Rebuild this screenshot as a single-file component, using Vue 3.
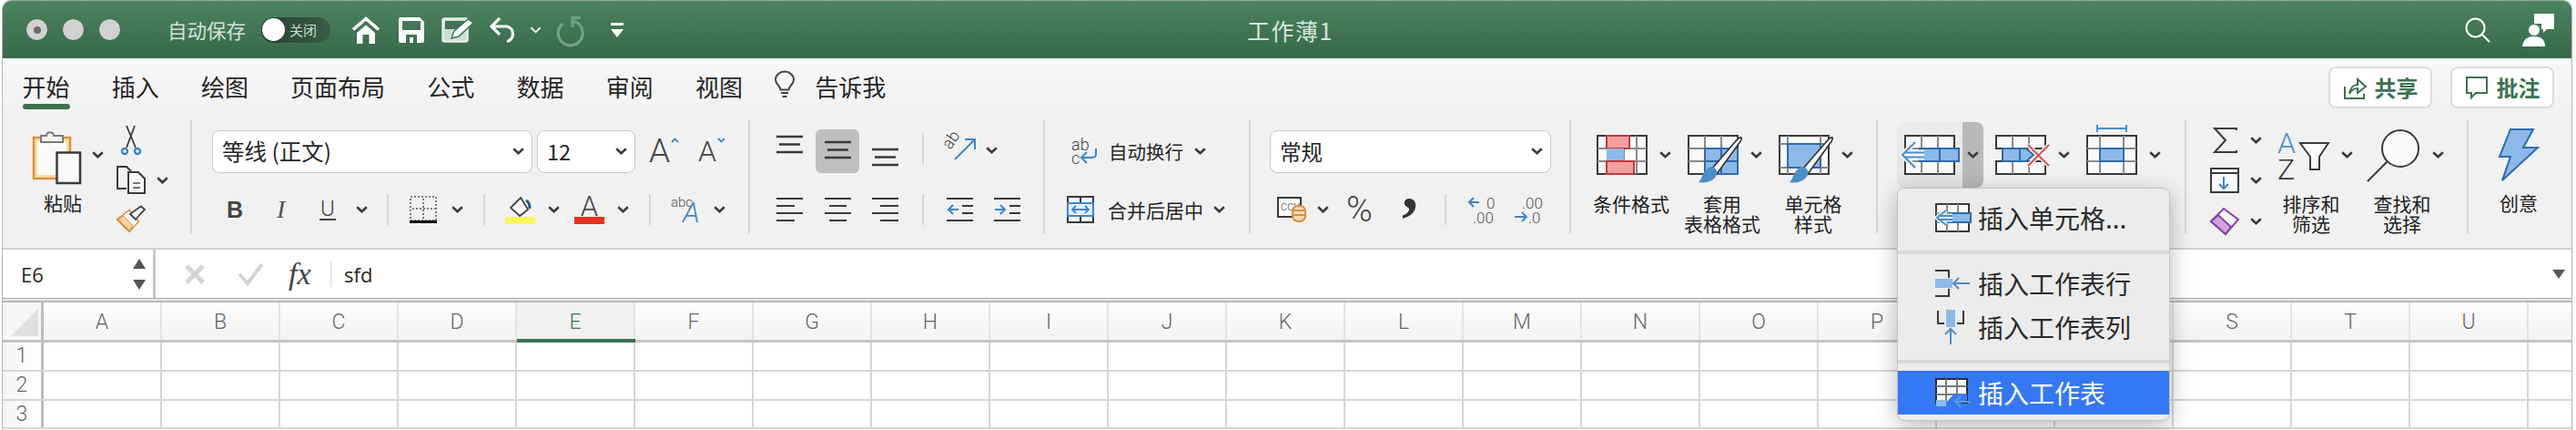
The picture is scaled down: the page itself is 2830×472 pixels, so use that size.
<template>
  <div class="window">
    <svg class="defs" width="0" height="0">
      <symbol id="chev" viewBox="0 0 13 8">
        <path d="M1.2 1.2L6.5 6.2L11.8 1.2" fill="none" stroke="#3a3a3a" stroke-width="2.6" />
      </symbol>
    </svg>

    <!-- title bar -->
    <header class="titlebar">
      <div class="tb-left">
        <span class="light"><i></i></span>
        <span class="light"></span>
        <span class="light"></span>
        <span class="autosave">自动保存</span>
        <span class="toggle"><b></b><em>关闭</em></span>
        <svg width="32" height="30" viewBox="0 0 32 30">
          <path d="M2 14.5L16 2.5L30 14.5" fill="none" stroke="#fff" stroke-width="3.6" />
          <path d="M6 18L16 9.5L26 18V30H19.5V20H12.5V30H6Z" fill="#fff" />
        </svg>
        <svg width="28" height="28" viewBox="0 0 28 28">
          <path fill-rule="evenodd" fill="#fff" d="M2 0H23L28 5V26a2 2 0 0 1-2 2H2a2 2 0 0 1-2-2V2a2 2 0 0 1 2-2ZM4 4V14H24V4ZM8 19V28H20V19ZM12 22H16V28H12Z" />
        </svg>
        <svg width="36" height="28" viewBox="0 0 36 28">
          <rect x="1.5" y="1.5" width="27" height="25" rx="2" fill="#cfded4" stroke="#e4ece7" stroke-width="2.5" />
          <rect x="4" y="4" width="22" height="9" fill="#3f7556" />
          <path d="M11 23L14 15L29 2L35 6L19 21Z" fill="#fff" stroke="#3f7556" stroke-width="1.5" />
        </svg>
        <svg width="31" height="29" viewBox="0 0 31 29">
          <path d="M11 2L2 11L11 20M2 11H19a8.5 8.5 0 0 1 0 16.5" fill="none" stroke="#fff" stroke-width="3.2" />
        </svg>
        <svg width="13" height="8" viewBox="0 0 13 8">
          <path d="M1.2 1.2L6.5 6.2L11.8 1.2" fill="none" stroke="#e8f0eb" stroke-width="2" />
        </svg>
        <svg width="30" height="30" viewBox="0 0 30 30">
          <path d="M6 8A13.5 13.5 0 1 0 17 5" fill="none" stroke="#74a086" stroke-width="3.2" />
          <path d="M26 1.5H17V12" fill="none" stroke="#74a086" stroke-width="3.2" />
        </svg>
        <svg width="14" height="16" viewBox="0 0 14 16">
          <rect width="14" height="3" fill="#fff" />
          <path d="M0 7H14L7 16Z" fill="#fff" />
        </svg>
      </div>
      <div class="tb-title">工作薄1</div>
      <div class="tb-right">
        <svg width="28" height="28" viewBox="0 0 28 28">
          <circle cx="11.5" cy="11.5" r="10" fill="none" stroke="#fff" stroke-width="2" />
          <path d="M18.5 18.5L27 27" stroke="#fff" stroke-width="2" />
        </svg>
        <svg width="36" height="36" viewBox="0 0 36 36">
          <path d="M13 0H35V17H27L23 21V17H21V11H13Z" fill="#fff" />
          <circle cx="13" cy="18" r="6.5" fill="#fff" stroke="#3c6f50" stroke-width="1" />
          <path d="M0 36C1 28 6 25 13 25S25 28 25 36Z" fill="#fff" />
        </svg>
      </div>
    </header>

    <!-- tabs -->
    <nav class="tabs">
      <span v-for="tab in tabs" :key="tab" class="tab" :class="{ active: tab === '开始' }">{{ tab }}</span>
      <span class="tell">
        <svg width="24" height="30" viewBox="0 0 24 30">
          <path d="M7.5 20.5C7 16 2 14.5 2 9.5a10 9 0 0 1 20 0C22 14.5 17 16 16.5 20.5Z" fill="none" stroke="#444" stroke-width="2" />
          <path d="M8 24H16M9.5 28H14.5" stroke="#444" stroke-width="2" />
        </svg>
        告诉我
      </span>
      <div class="tab-actions">
        <button class="pill">
          <svg width="26" height="26" viewBox="0 0 26 26">
            <path d="M2 12V25H23V20" fill="none" stroke="#3b7250" stroke-width="2" />
            <path d="M7 20C8 13 12 10 16 10V4L25 12L16 19V14C12 14 9 16 7 20Z" fill="none" stroke="#3b7250" stroke-width="2" />
          </svg>
          共享
        </button>
        <button class="pill">
          <svg width="26" height="26" viewBox="0 0 26 26">
            <path d="M2 2H24V19H12L7 24V19H2Z" fill="none" stroke="#3b7250" stroke-width="2" />
          </svg>
          批注
        </button>
      </div>
    </nav>

    <!-- ribbon -->
    <section class="ribbon">
      <!-- clipboard -->
      <div class="group g-clip">
        <div class="paste">
          <div class="paste-top">
            <svg width="53" height="59" viewBox="0 0 53 59">
              <rect x="1" y="8" width="40" height="45" fill="#fbdc9e" stroke="#df8c3e" stroke-width="2.4" />
              <rect x="5" y="12" width="32" height="37" fill="#fafafa" />
              <path d="M9 13V6H15C15.5 1 22.5 1 23 6H33V13Z" fill="#f4f4f4" stroke="#7a7a7a" stroke-width="2" />
              <rect x="26.5" y="24.5" width="25.5" height="33.5" fill="#fafafa" stroke="#3a3a3a" stroke-width="2.5" />
            </svg>
            <svg class="chev" width="13" height="8"><use href="#chev" /></svg>
          </div>
          <span class="lbl paste-lbl">粘贴</span>
        </div>
        <div class="clip-tools">
          <svg width="32" height="32" viewBox="0 0 32 32">
            <path d="M11 0L21 24M20 0L11 24" stroke="#3a3a3a" stroke-width="1.8" fill="none" />
            <circle cx="9" cy="28" r="3" fill="none" stroke="#3f85c8" stroke-width="2.4" />
            <circle cx="23" cy="28" r="3" fill="none" stroke="#3f85c8" stroke-width="2.4" />
          </svg>
          <div class="copy-row">
            <svg width="32" height="31" viewBox="0 0 32 31">
              <path d="M11 25H1V1H11L16 6" fill="none" stroke="#3a3a3a" stroke-width="2" />
              <path d="M13 7H24L31 14V30H13Z" fill="#fafafa" stroke="#3a3a3a" stroke-width="2" />
              <path d="M18 19H26M18 24H26" stroke="#777" stroke-width="2" />
            </svg>
            <svg width="13" height="8"><use href="#chev" /></svg>
          </div>
          <svg width="32" height="30" viewBox="0 0 32 30">
            <path d="M1 16L14 6L24 18L14 29Z" fill="#fad49c" stroke="#df8c3e" stroke-width="2.2" />
            <path d="M7 11.5L19 24L24 18L14 6Z" fill="#fafafa" stroke="#df8c3e" stroke-width="1" />
            <path d="M15 10L21 5.5L27 1.5L31 5L26 10L21 16Z" fill="#f4f4f4" stroke="#444" stroke-width="1.8" />
          </svg>
        </div>
      </div>

      <!-- font -->
      <div class="group g-font">
        <div class="row-top font-top">
          <div class="select font-name"><span>等线 (正文)</span><svg width="13" height="8"><use href="#chev" /></svg></div>
          <div class="select font-size"><span>12</span><svg width="13" height="8"><use href="#chev" /></svg></div>
          <span class="grow">
            <span class="big-a">A</span>
            <svg width="9" height="6" viewBox="0 0 9 6"><path d="M1 5L4.5 1.5L8 5" fill="none" stroke="#3f85c8" stroke-width="1.8" /></svg>
          </span>
          <span class="grow">
            <span class="big-a small-a">A</span>
            <svg width="9" height="6" viewBox="0 0 9 6"><path d="M1 1L4.5 4.5L8 1" fill="none" stroke="#3f85c8" stroke-width="1.8" /></svg>
          </span>
        </div>
        <div class="row-bot font-bot">
          <span class="fmt-b">B</span>
          <span class="fmt-i">I</span>
          <span class="fmt-u">U</span>
          <svg width="13" height="8"><use href="#chev" /></svg>
          <i class="sep"></i>
          <svg width="30" height="30" viewBox="0 0 30 30">
            <rect x="1" y="1" width="28" height="26" fill="none" stroke="#555" stroke-width="1.5" stroke-dasharray="2 2" />
            <path d="M15 3V26M3 14H28" stroke="#555" stroke-width="1.5" stroke-dasharray="2 2" />
            <rect y="27" width="30" height="3" fill="#111" />
          </svg>
          <svg width="13" height="8"><use href="#chev" /></svg>
          <i class="sep"></i>
          <svg width="33" height="31" viewBox="0 0 33 31">
            <path d="M6 13L17 2L25 15L16 22Z" fill="#fafafa" stroke="#444" stroke-width="1.8" />
            <path d="M23 5C27 7 27 11 27 14" fill="none" stroke="#26588f" stroke-width="3" />
            <rect y="23" width="33" height="8" fill="#fbf65c" />
          </svg>
          <svg width="13" height="8"><use href="#chev" /></svg>
          <span class="color-a"><span>A</span><i></i></span>
          <svg width="13" height="8"><use href="#chev" /></svg>
          <i class="sep"></i>
          <svg width="36" height="30" viewBox="0 0 36 30">
            <text x="0" y="12" class="svg-t" font-size="15" fill="#555">abc</text>
            <text x="13" y="29" class="svg-t" font-size="31" font-style="italic" fill="#3f85c8">A</text>
          </svg>
          <svg width="13" height="8"><use href="#chev" /></svg>
        </div>
      </div>

      <!-- alignment -->
      <div class="group g-align">
        <div class="row-top align-top">
          <svg width="29" height="48" viewBox="0 0 29 48">
            <path d="M0 8H29M3 16.5H26M0 25H29" stroke="#3a3a3a" stroke-width="2.4" />
          </svg>
          <span class="on-btn">
            <svg width="29" height="48" viewBox="0 0 29 48">
              <path d="M0 14H29M3 22.5H26M0 31H29" stroke="#3a3a3a" stroke-width="2.4" />
            </svg>
          </span>
          <svg width="29" height="48" viewBox="0 0 29 48">
            <path d="M0 22H29M3 30.5H26M0 39H29" stroke="#3a3a3a" stroke-width="2.4" />
          </svg>
          <i class="sep tall"></i>
          <svg class="orient" width="36" height="30" viewBox="0 0 36 30">
            <text class="svg-t" font-size="18" fill="#444" transform="translate(7 19) rotate(-55)">ab</text>
            <path d="M12 29L33 8M23 7H34V18" fill="none" stroke="#3f85c8" stroke-width="2" />
          </svg>
          <svg class="orient-chev" width="13" height="8"><use href="#chev" /></svg>
        </div>
        <div class="row-bot align-bot">
          <svg width="29" height="34" viewBox="0 0 29 34"><path d="M0 5H29M0 13H20M0 21H29M0 29H20" stroke="#3a3a3a" stroke-width="2.2" /></svg>
          <svg width="29" height="34" viewBox="0 0 29 34"><path d="M0 5H29M5 13H24M0 21H29M5 29H24" stroke="#3a3a3a" stroke-width="2.2" /></svg>
          <svg width="29" height="34" viewBox="0 0 29 34"><path d="M0 5H29M9 13H29M0 21H29M9 29H29" stroke="#3a3a3a" stroke-width="2.2" /></svg>
          <i class="sep"></i>
          <svg width="29" height="34" viewBox="0 0 29 34">
            <path d="M0 5H29M17 13H29M17 21H29M0 29H29" stroke="#3a3a3a" stroke-width="2.2" />
            <path d="M13 17H2M7 12L2 17L7 22" fill="none" stroke="#3f85c8" stroke-width="2" />
          </svg>
          <svg width="29" height="34" viewBox="0 0 29 34">
            <path d="M0 5H29M17 13H29M17 21H29M0 29H29" stroke="#3a3a3a" stroke-width="2.2" />
            <path d="M1 17H12M7 12L12 17L7 22" fill="none" stroke="#3f85c8" stroke-width="2" />
          </svg>
        </div>
      </div>

      <!-- wrap / merge -->
      <div class="group g-wrap">
        <div class="row-top wrap-top">
          <svg width="30" height="30" viewBox="0 0 30 30">
            <text x="0" y="14" class="svg-t" font-size="18" fill="#444">ab</text>
            <text x="0" y="29" class="svg-t" font-size="18" fill="#444">c</text>
            <path d="M27 12V18Q27 22 22 22H11M17 16L11 22L17 28" fill="none" stroke="#3f85c8" stroke-width="2" />
          </svg>
          <span class="cmd">自动换行</span>
          <svg width="13" height="8"><use href="#chev" /></svg>
        </div>
        <div class="row-bot wrap-bot">
          <svg width="30" height="30" viewBox="0 0 30 30">
            <rect x="1" y="1" width="28" height="28" fill="#fafafa" stroke="#3a3a3a" stroke-width="2" />
            <path d="M15 1V8M15 22V29" stroke="#3a3a3a" stroke-width="2" />
            <rect x="1" y="8" width="28" height="14" fill="#e8f1fa" stroke="#3f85c8" stroke-width="2" />
            <path d="M6 15H24M10 11L6 15L10 19M20 11L24 15L20 19" fill="none" stroke="#3f85c8" stroke-width="1.8" />
          </svg>
          <span class="cmd cmd-lg">合并后居中</span>
          <svg width="13" height="8"><use href="#chev" /></svg>
        </div>
      </div>

      <!-- number -->
      <div class="group g-num">
        <div class="row-top num-top">
          <div class="select wide"><span>常规</span><svg width="13" height="8"><use href="#chev" /></svg></div>
        </div>
        <div class="row-bot num-bot">
          <svg width="32" height="28" viewBox="0 0 32 28">
            <rect x="1" y="1" width="25" height="21" fill="#fafafa" stroke="#3a3a3a" stroke-width="2" />
            <text x="4" y="15" class="svg-t" font-size="11" fill="#444">CCY</text>
            <rect x="17" y="10" width="14" height="17" rx="6" fill="#f6dcb8" stroke="#df8c3e" stroke-width="2" />
            <path d="M17 15H31M17 20H31" stroke="#df8c3e" stroke-width="1.8" />
          </svg>
          <svg width="13" height="8"><use href="#chev" /></svg>
          <span class="pct">%</span>
          <svg width="20" height="30" viewBox="0 0 20 30">
            <text x="0" y="14" font-family="Liberation Serif" font-weight="700" font-size="72" fill="#333">,</text>
          </svg>
          <i class="sep"></i>
          <svg width="32" height="32" viewBox="0 0 32 32">
            <path d="M13 8H2M7 3L2 8L7 13" fill="none" stroke="#3f85c8" stroke-width="2" />
            <text x="21" y="15" class="svg-t" font-size="17" fill="#555">0</text>
            <text x="6" y="31" class="svg-t" font-size="17" fill="#555">.00</text>
          </svg>
          <svg width="32" height="32" viewBox="0 0 32 32">
            <text x="8" y="15" class="svg-t" font-size="17" fill="#555">.00</text>
            <path d="M0 24H13M8 19L13 24L8 29" fill="none" stroke="#3f85c8" stroke-width="2" />
            <text x="15" y="31" class="svg-t" font-size="17" fill="#555">.0</text>
          </svg>
        </div>
      </div>

      <!-- styles -->
      <div class="group g-styles">
        <div class="big-col">
          <div class="big-top">
            <svg width="60" height="54" viewBox="0 0 60 54">
              <rect x="1" y="1" width="54" height="42" fill="#fafafa" stroke="#3a3a3a" stroke-width="2" />
              <path d="M12 1V43M30 1V43M44 1V43M1 15H55M1 29H55" stroke="#8a8a8a" stroke-width="2" />
              <rect x="11" y="1" width="25" height="14" fill="#f4a0a0" stroke="#bf3a3a" stroke-width="2" />
              <rect x="11" y="15" width="19" height="14" fill="#8cb9e8" />
              <rect x="11" y="29" width="30" height="14" fill="#f4a0a0" stroke="#bf3a3a" stroke-width="2" />
            </svg>
            <svg width="13" height="8"><use href="#chev" /></svg>
          </div>
          <span class="lbl">条件格式</span>
        </div>
        <div class="big-col">
          <div class="big-top">
            <svg width="60" height="54" viewBox="0 0 60 54">
              <rect x="1" y="1" width="54" height="42" fill="#fafafa" stroke="#3a3a3a" stroke-width="2" />
              <path d="M19 1V43M37 1V43M1 15H55M1 29H55" stroke="#8a8a8a" stroke-width="2" />
              <rect x="19" y="15" width="36" height="28" fill="#8cb9e8" stroke="#2e6bb0" stroke-width="2" />
              <path d="M37 15V43M19 29H55" stroke="#2e6bb0" stroke-width="2" />
              <path d="M26 38L52 8Q57 2 59 3Q60 5 56 10L32 43Z" fill="#fafafa" stroke="#3a3a3a" stroke-width="1.8" />
              <path d="M25 35C32 35 35 42 30 47C25 53 15 53 12 52C17 48 15 40 25 35Z" fill="#4c8ecb" />
            </svg>
            <svg width="13" height="8"><use href="#chev" /></svg>
          </div>
          <span class="lbl">套用<br />表格格式</span>
        </div>
        <div class="big-col">
          <div class="big-top">
            <svg width="60" height="54" viewBox="0 0 60 54">
              <rect x="1" y="1" width="54" height="42" fill="#fafafa" stroke="#3a3a3a" stroke-width="2" />
              <path d="M10 1V43M46 1V43M1 10H55M1 36H55" stroke="#8a8a8a" stroke-width="2" />
              <rect x="10" y="10" width="36" height="26" fill="#8cb9e8" stroke="#2e6bb0" stroke-width="2" />
              <path d="M26 38L52 8Q57 2 59 3Q60 5 56 10L32 43Z" fill="#fafafa" stroke="#3a3a3a" stroke-width="1.8" />
              <path d="M25 35C32 35 35 42 30 47C25 53 15 53 12 52C17 48 15 40 25 35Z" fill="#4c8ecb" />
            </svg>
            <svg width="13" height="8"><use href="#chev" /></svg>
          </div>
          <span class="lbl">单元格<br />样式</span>
        </div>
      </div>

      <!-- cells -->
      <div class="group g-cells">
        <div class="split on">
          <span class="split-main">
            <svg width="72" height="72" viewBox="0 0 72 72">
              <rect x="9" y="15" width="54" height="42" fill="#fafafa" stroke="#3a3a3a" stroke-width="2" />
              <path d="M27 15V57M45 15V57M9 29H63M9 43H63" stroke="#8a8a8a" stroke-width="2" />
              <rect x="25" y="29" width="43" height="14" fill="#8cb9e8" stroke="#2e6bb0" stroke-width="2" />
              <path d="M47 29V43" stroke="#2e6bb0" stroke-width="2" />
              <path d="M20 22L6 36L20 50M8 33.5H30M8 38.5H30" fill="none" stroke="#f4f4f4" stroke-width="6" />
              <path d="M20 22L6 36L20 50M8 33.5H30M8 38.5H30" fill="none" stroke="#4c8ecb" stroke-width="2" />
            </svg>
          </span>
          <span class="split-arrow"><svg width="13" height="8"><use href="#chev" /></svg></span>
        </div>
        <div class="split">
          <span class="split-main">
            <svg width="72" height="72" viewBox="0 0 72 72">
              <path d="M9 29V15H63V29ZM9 43V57H63V43Z" fill="#fafafa" stroke="#3a3a3a" stroke-width="2" />
              <path d="M27 15V29M45 15V29M27 43V57M45 43V57" stroke="#8a8a8a" stroke-width="2" />
              <path d="M16 29H42L50 36L42 43H16Z" fill="#8cb9e8" stroke="#2e6bb0" stroke-width="2" />
              <path d="M35 29V43" stroke="#2e6bb0" stroke-width="2" />
              <path d="M44 25L67 48M67 25L44 48" stroke="#f4f4f4" stroke-width="5" />
              <path d="M44 25L67 48M67 25L44 48" stroke="#d9534f" stroke-width="2" />
            </svg>
          </span>
          <span class="split-arrow"><svg width="13" height="8"><use href="#chev" /></svg></span>
        </div>
        <div class="split">
          <span class="split-main">
            <svg width="72" height="72" viewBox="0 0 72 72">
              <path d="M20 3V11M52 3V11M20 7H52" stroke="#4c8ecb" stroke-width="2" fill="none" />
              <rect x="9" y="15" width="54" height="42" fill="#fafafa" stroke="#3a3a3a" stroke-width="2" />
              <path d="M23 15V57M49 15V57M9 29H63M9 43H63" stroke="#8a8a8a" stroke-width="2" />
              <rect x="23" y="29" width="26" height="14" fill="#8cb9e8" stroke="#2e6bb0" stroke-width="2" />
            </svg>
          </span>
          <span class="split-arrow"><svg width="13" height="8"><use href="#chev" /></svg></span>
        </div>
      </div>

      <!-- editing -->
      <div class="group g-edit">
        <div class="edit-left">
          <div class="edit-row">
            <svg width="32" height="28" viewBox="0 0 32 28">
              <path d="M29 3V1H5L17 14L5 27H29V25" fill="none" stroke="#3a3a3a" stroke-width="2" />
            </svg>
            <svg width="13" height="8"><use href="#chev" /></svg>
          </div>
          <div class="edit-row">
            <svg width="32" height="28" viewBox="0 0 32 28">
              <rect x="1" y="1" width="30" height="26" fill="#fafafa" stroke="#3a3a3a" stroke-width="2" />
              <path d="M1 6H31" stroke="#3a3a3a" stroke-width="2" />
              <path d="M15 10V23M10 18L15 23L20 18" fill="none" stroke="#3f85c8" stroke-width="2" />
            </svg>
            <svg width="13" height="8"><use href="#chev" /></svg>
          </div>
          <div class="edit-row">
            <svg width="32" height="30" viewBox="0 0 32 30">
              <path d="M1 15L15 1L31 13L17 29Z" fill="#fafafa" stroke="#8a3fa8" stroke-width="2" />
              <path d="M1 15L9 8L23 21L17 29Z" fill="#cfa3dc" stroke="#8a3fa8" stroke-width="2" />
            </svg>
            <svg width="13" height="8"><use href="#chev" /></svg>
          </div>
        </div>
        <div class="big-col edit-col">
          <div class="big-top edit-top">
            <svg width="60" height="62" viewBox="0 0 60 62">
              <text x="0" y="28" font-family="Roboto" font-weight="300" font-size="32" fill="#4c8ecb">A</text>
              <text x="0" y="57" font-family="Roboto" font-weight="300" font-size="32" fill="#3a3a3a">Z</text>
              <path d="M25 17H56L46 32V46H36V32Z" fill="#fafafa" stroke="#3a3a3a" stroke-width="2" />
            </svg>
            <svg width="13" height="8"><use href="#chev" /></svg>
          </div>
          <span class="lbl narrow">排序和<br />筛选</span>
        </div>
        <div class="big-col edit-col search-col">
          <div class="big-top edit-top">
            <svg width="60" height="62" viewBox="0 0 60 62">
              <circle cx="37" cy="23" r="20" fill="#fafafa" stroke="#3a3a3a" stroke-width="2" />
              <path d="M23 37L1 59" stroke="#3a3a3a" stroke-width="2" />
            </svg>
            <svg width="13" height="8"><use href="#chev" /></svg>
          </div>
          <span class="lbl narrow">查找和<br />选择</span>
        </div>
      </div>

      <!-- ideas -->
      <div class="group g-idea">
        <svg width="44" height="58" viewBox="0 0 44 58">
          <path d="M13 1H38L27 21H43L4 57L13 31H1Z" fill="#8cb9e8" stroke="#2e6bb0" stroke-width="2" />
        </svg>
        <span class="lbl">创意</span>
      </div>
    </section>

    <!-- formula bar -->
    <section class="formula">
      <div class="namebox">
        <span>E6</span>
        <svg width="16" height="34" viewBox="0 0 16 34">
          <path d="M1 11L8 0L15 11ZM1 23L8 34L15 23Z" fill="#555" />
        </svg>
      </div>
      <div class="fx-tools">
        <svg width="24" height="24" viewBox="0 0 24 24">
          <path d="M3 3L21 21M21 3L3 21" stroke="#d4d4d4" stroke-width="5" />
        </svg>
        <svg width="30" height="26" viewBox="0 0 30 26">
          <path d="M2 13L11 23L27 2" fill="none" stroke="#d4d4d4" stroke-width="4" />
        </svg>
        <span class="fx">fx</span>
        <i class="fx-sep"></i>
        <span class="fx-val">sfd</span>
      </div>
      <svg class="fx-more" width="14" height="10" viewBox="0 0 14 10"><path d="M0 0H14L7 10Z" fill="#555" /></svg>
    </section>

    <!-- sheet -->
    <section class="sheet">
      <div class="s-row head">
        <div class="corner">
          <svg width="30" height="30" viewBox="0 0 30 30"><path d="M30 0V30H0Z" fill="#dfdfdf" /></svg>
        </div>
        <div v-for="c in cols" :key="c" class="col-h" :class="{ active: c === 'E' }">{{ c }}</div>
      </div>
      <div v-for="r in [1, 2, 3]" :key="r" class="s-row">
        <div class="row-h">{{ r }}</div>
        <div v-for="c in cols" :key="c" class="cell"></div>
      </div>
    </section>

    <!-- insert menu -->
    <div class="menu">
      <div class="m-item m-first">
        <svg width="40" height="32" viewBox="0 0 40 32">
          <rect x="1" y="1" width="36" height="30" fill="#fafafa" stroke="#3a3a3a" stroke-width="2" />
          <path d="M13 1V31M25 1V31M1 11H37M1 21H37" stroke="#8a8a8a" stroke-width="2" />
          <rect x="14" y="11" width="25" height="10" fill="#8cb9e8" stroke="#2e6bb0" stroke-width="2" />
          <path d="M12 8L2 16L12 24M3 14H19M3 18H19" fill="none" stroke="#eee" stroke-width="5" />
          <path d="M12 8L2 16L12 24M3 14H19M3 18H19" fill="none" stroke="#4c8ecb" stroke-width="1.8" />
        </svg>
        <span>插入单元格...</span>
      </div>
      <div class="m-sep"></div>
      <div class="m-item">
        <svg width="40" height="30" viewBox="0 0 40 30">
          <path d="M0 1H15V9M0 29H15V21" fill="none" stroke="#3a3a3a" stroke-width="2" />
          <rect y="10" width="19" height="10" fill="#8cb9e8" />
          <path d="M38 15H20M26 9L20 15L26 21" fill="none" stroke="#4c8ecb" stroke-width="2" />
        </svg>
        <span>插入工作表行</span>
      </div>
      <div class="m-item">
        <svg width="40" height="38" viewBox="0 0 40 38">
          <path d="M3 1V15H10M31 1V15H24" fill="none" stroke="#3a3a3a" stroke-width="2" />
          <rect x="12" y="0" width="10" height="19" fill="#8cb9e8" />
          <path d="M17 38V21M11 27L17 21L23 27" fill="none" stroke="#4c8ecb" stroke-width="2" />
        </svg>
        <span>插入工作表列</span>
      </div>
      <div class="m-sep"></div>
      <div class="m-item m-sel">
        <svg width="40" height="32" viewBox="0 0 40 32">
          <rect x="1" y="1" width="34" height="26" fill="#fafafa" stroke="#2b2b2b" stroke-width="2" />
          <path d="M1 9H35M12 1V27M24 1V27M1 18H35" stroke="#7a7a7a" stroke-width="2" />
          <path d="M1 27H12L20 18L35 17V24L22 31H1Z" fill="#3478f6" />
          <path d="M1 24H12V31H1Z" fill="#8cb9e8" />
          <path d="M39 26H22M28 20L22 26L28 32" fill="none" stroke="#5b9bd8" stroke-width="2" />
        </svg>
        <span>插入工作表</span>
      </div>
    </div>
  </div>
</template>

<script setup>
const tabs = ["开始", "插入", "绘图", "页面布局", "公式", "数据", "审阅", "视图"];
const cols = "ABCDEFGHIJKLMNOPQRSTUV".split("");
</script>

<style>
html,
body {
  margin: 0;
  background: #fff;
  overflow: hidden;
}
</style>

<style scoped>
.window {
  position: relative;
  width: 2824px;
  height: 472px;
  margin-left: 2px;
  box-sizing: border-box;
  border-top: 1px solid #9fa8a2;
  border-left: 1px solid #b5b5b5;
  border-right: 1px solid #b5b5b5;
  border-radius: 10px 10px 0 0;
  overflow: hidden;
  background: #fff;
  color: #262626;
  font-family: "Noto Sans CJK SC", "Liberation Sans", sans-serif;
}
.defs {
  position: absolute;
}
svg {
  display: block;
  flex: none;
  overflow: visible;
}
i {
  font-style: normal;
}

/* title bar */
.titlebar {
  display: flex;
  align-items: center;
  height: 63px;
  background: linear-gradient(#4c8360, #36684a);
}
.tb-left {
  flex: 1 1 0;
  display: grid;
  grid-template-columns: 40px 40px 76px 103px 99px 52px 47px 53px 44px 30px 59px auto;
  justify-items: start;
  align-items: center;
  padding-left: 25px;
}
.light {
  display: flex;
  align-items: center;
  justify-content: center;
  width: 25px;
  height: 25px;
  box-sizing: border-box;
  border: 1px solid #3e5f48;
  border-radius: 50%;
  background: #d2d2d2;
}
.light i {
  width: 8px;
  height: 8px;
  border-radius: 50%;
  background: #6c6c6c;
}
.autosave {
  font-size: 21.5px;
  line-height: 30px;
  color: #d4e2d9;
  white-space: nowrap;
}
.toggle {
  display: flex;
  align-items: center;
  width: 76px;
  height: 28px;
  border-radius: 14px;
  background: linear-gradient(90deg, #24402f, #3a5c48);
}
.toggle b {
  width: 25px;
  height: 25px;
  margin-left: 1px;
  border-radius: 50%;
  background: #fff;
}
.toggle em {
  margin-left: 5px;
  font-style: normal;
  font-size: 15px;
  line-height: 20px;
  color: #cfdcd4;
}
.tb-title {
  font-size: 25px;
  line-height: 32px;
  letter-spacing: 1.5px;
  color: #d8e6dd;
}
.tb-right {
  flex: 1 1 0;
  display: flex;
  justify-content: flex-end;
  align-items: center;
  gap: 35px;
  padding-right: 18px;
}

/* tabs */
.tabs {
  display: flex;
  height: 56px;
  padding-left: 21.5px;
  box-sizing: border-box;
  background: linear-gradient(#f8f8f8, #f2f2f2);
}
.tab {
  position: relative;
  margin-right: 46.2px;
  padding-top: 13px;
  font-size: 26px;
  line-height: 36px;
}
.tab.active::after {
  content: "";
  position: absolute;
  left: 0;
  right: 0;
  bottom: 0;
  height: 6px;
  border-radius: 3px;
  background: #3b7250;
}
.tell {
  display: flex;
  align-items: flex-start;
  gap: 21px;
  margin-left: -12px;
  padding-top: 13px;
  font-size: 26px;
  line-height: 36px;
}
.tell svg {
  margin-top: 1px;
}
.tab-actions {
  display: flex;
  gap: 20px;
  margin-left: auto;
  padding: 9px 19px 0 0;
}
.pill {
  display: flex;
  align-items: center;
  justify-content: center;
  gap: 9px;
  width: 114px;
  height: 46px;
  box-sizing: border-box;
  padding: 0;
  background: #fff;
  border: 2px solid #dcdcdc;
  border-radius: 8px;
  font: 700 24px/30px "Noto Sans CJK SC", sans-serif;
  color: #3b7250;
}

/* ribbon */
.ribbon {
  display: flex;
  height: 154px;
  box-sizing: border-box;
  padding-top: 12px;
  background: #f1f1f1;
  border-bottom: 2px solid #cfcfcf;
}
.group {
  flex: none;
  height: 124px;
  box-sizing: border-box;
  border-right: 2px solid #d6d6d6;
}
.lbl {
  display: block;
  font-size: 21px;
  line-height: 22px;
  text-align: center;
  color: #1e1e1e;
}
.sep {
  width: 2px;
  height: 34px;
  background: #d6d6d6;
}
.sep.tall {
  height: 35px;
  margin-top: -6px;
}
.row-top,
.row-bot {
  display: grid;
  justify-items: start;
  align-items: center;
}
.row-top {
  height: 48px;
  margin-top: 10px;
}
.row-bot {
  height: 34px;
  margin-top: 23px;
}
.select {
  display: flex;
  align-items: center;
  justify-content: space-between;
  height: 47px;
  box-sizing: border-box;
  padding: 0 8px 0 10px;
  background: #fff;
  border: 1px solid #c9c9c9;
  border-radius: 8px;
  font-size: 23.5px;
  line-height: 30px;
}

/* clipboard */
.g-clip {
  display: flex;
  width: 208px;
  padding-left: 33px;
}
.paste {
  width: 92px;
  padding-top: 11px;
}
.paste-top {
  display: flex;
  height: 68px;
}
.paste-top .chev {
  margin: 23px 0 0 12px;
}
.paste-lbl {
  width: 66px;
}
.clip-tools {
  display: flex;
  flex-direction: column;
  gap: 12px;
  padding-top: 6px;
}
.copy-row {
  display: flex;
  align-items: center;
  gap: 12px;
}

/* font */
.g-font {
  width: 613px;
  padding-left: 22px;
}
.font-top {
  grid-template-columns: 357px 123px 54px auto;
}
.font-name {
  width: 352px;
  font-size: 24.5px;
}
.font-size {
  width: 108px;
}
.grow {
  display: flex;
  align-items: flex-start;
  gap: 1px;
}
.grow svg {
  margin-top: 9px;
}
.big-a {
  font: 300 37px/48px Roboto, sans-serif;
  color: #444;
}
.small-a {
  font-size: 32px;
}
.font-bot {
  padding-left: 16px;
  grid-template-columns: 53px 49px 40px 34px 25px 46px 35px 24px 47px 29px 47px 35px 24px 47px auto;
}
.fmt-b {
  font: 700 25px/30px "Liberation Sans", sans-serif;
  color: #444;
}
.fmt-i {
  font: italic 400 28px/30px "Liberation Serif", serif;
  color: #555;
  margin-left: 2px;
}
.fmt-u {
  font: 300 24px/22px Roboto, sans-serif;
  color: #444;
  border-bottom: 2px solid #444;
  padding: 0 1px;
}
.color-a {
  display: flex;
  flex-direction: column;
  width: 33px;
  align-items: center;
}
.color-a span {
  font: 300 31px/23px Roboto, sans-serif;
  color: #444;
}
.color-a i {
  width: 33px;
  height: 8px;
  background: #e8321f;
}

/* alignment */
.g-align {
  width: 324px;
  padding-left: 29px;
}
.align-top {
  grid-template-columns: 43px 62px 55px 24px 46px auto;
}
.on-btn {
  display: flex;
  justify-content: center;
  width: 48px;
  height: 48px;
  border-radius: 6px;
  background: #bfbfbf;
}
.orient {
  margin-top: -10px;
}
.orient-chev {
  margin-top: -2px;
}
.align-bot {
  grid-template-columns: 53px 52px 55px 27px 52px auto;
}

/* wrap */
.g-wrap {
  width: 226px;
  padding-left: 24px;
}
.wrap-top {
  padding-left: 5px;
  grid-template-columns: 41px 94px auto;
}
.wrap-bot {
  grid-template-columns: 45px 116px auto;
}
.cmd {
  font-size: 20.5px;
  line-height: 30px;
  white-space: nowrap;
}
.cmd-lg {
  font-size: 21px;
}

/* number */
.g-num {
  width: 352px;
  padding-left: 21px;
}
.num-top {
  grid-template-columns: 309px;
}
.select.wide {
  width: 309px;
}
.num-bot {
  padding-left: 8px;
  grid-template-columns: 44px 32px 61px 47px 25px 52px auto;
}
.pct {
  font: 300 39px/34px Roboto, sans-serif;
  color: #444;
}

/* styles */
.g-styles {
  display: flex;
  width: 337px;
  padding: 16px 0 0 16px;
}
.big-col {
  width: 100px;
}
.big-top {
  display: grid;
  grid-template-columns: 69px auto;
  justify-items: start;
  height: 64px;
  padding-left: 12px;
  box-sizing: border-box;
}
.big-top svg:last-child {
  margin-top: 18px;
}

/* cells */
.g-cells {
  display: flex;
  gap: 5px;
  width: 339px;
  padding: 2px 0 0 21px;
}
.split {
  display: flex;
  height: 72px;
}
.split-main {
  display: block;
  width: 72px;
  border-radius: 8px 0 0 8px;
}
.split-arrow {
  display: flex;
  align-items: center;
  justify-content: center;
  width: 23px;
  border-radius: 0 8px 8px 0;
}
.split.on .split-main {
  background: linear-gradient(#ececec, #e4e4e4);
}
.split.on .split-arrow {
  background: #b9b9b9;
}

/* editing */
.g-edit {
  display: flex;
  width: 310px;
  padding: 8px 0 0 26px;
}
.edit-left {
  display: flex;
  flex-direction: column;
  gap: 16px;
  width: 69px;
}
.edit-row {
  display: flex;
  align-items: center;
  gap: 12px;
}
.edit-col {
  width: 100px;
}
.edit-top {
  height: 72px;
  padding-left: 5px;
  grid-template-columns: 70px auto;
}
.edit-top svg:last-child {
  margin-top: 26px;
}
.search-col .edit-top {
  padding-left: 3px;
  grid-template-columns: 72px auto;
}
.lbl.narrow {
  width: 84px;
}

/* ideas */
.g-idea {
  display: flex;
  flex-direction: column;
  align-items: center;
  width: 110px;
  padding-top: 9px;
  border-right: 0;
}
.g-idea .lbl {
  margin-top: 12px;
}

/* formula bar */
.formula {
  display: flex;
  align-items: center;
  height: 54px;
  box-sizing: border-box;
  border-bottom: 1px solid #a8a8a8;
}
.namebox {
  display: flex;
  align-items: center;
  justify-content: space-between;
  width: 168px;
  height: 53px;
  box-sizing: border-box;
  padding: 0 7px 0 20px;
  border-right: 3px solid #c8c8c8;
  font: 400 22px/30px "Open Sans", sans-serif;
}
.fx-tools {
  display: grid;
  grid-template-columns: 59px 56px 46px 15px auto;
  align-items: center;
  padding-left: 31px;
}
.fx {
  font: italic 400 34px/40px "Liberation Serif", serif;
  color: #444;
}
.fx-sep {
  width: 1px;
  height: 28px;
  background: #d6d6d6;
}
.fx-val {
  font: 400 22px/30px "Open Sans", sans-serif;
}
.fx-more {
  margin-left: auto;
  margin-right: 7px;
}

/* sheet */
.sheet {
  overflow: hidden;
  border-top: 2px solid #e8e8e8;
}
.s-row {
  display: flex;
  height: 31.5px;
  box-sizing: border-box;
  border-bottom: 2px solid #d6d6d6;
}
.head + .s-row {
  height: 32px;
}
.s-row.head {
  height: 46px;
  border-top: 2px solid #b8b8b8;
  border-bottom: 3px solid #c4c4c4;
}
.corner {
  flex: none;
  width: 45px;
  padding: 7px 0 0 9px;
  box-sizing: border-box;
  border-right: 3px solid #bdbdbd;
  background: #f6f6f6;
}
.col-h {
  flex: none;
  position: relative;
  width: 130px;
  box-sizing: border-box;
  border-right: 2px solid #e4e4e4;
  background: linear-gradient(#fdfdfd, #f3f3f3);
  font: 300 23px/44px Roboto, sans-serif;
  text-align: center;
  color: #666;
}
.col-h.active {
  background: #f1f1f1;
  color: #3b7250;
}
.col-h.active::after {
  content: "";
  position: absolute;
  left: 0;
  right: -2px;
  bottom: -3px;
  height: 4px;
  background: #3b7250;
}
.row-h {
  flex: none;
  width: 45px;
  box-sizing: border-box;
  border-right: 3px solid #bdbdbd;
  background: linear-gradient(90deg, #f5f5f5, #fff);
  font: 300 23px/30px Roboto, sans-serif;
  text-align: center;
  color: #666;
}
.cell {
  flex: none;
  width: 130px;
  box-sizing: border-box;
  border-right: 2px solid #d6d6d6;
}

/* menu */
.menu {
  position: absolute;
  left: 2081px;
  top: 205px;
  width: 300px;
  height: 256px;
  box-sizing: border-box;
  padding-top: 8px;
  background: #ececec;
  border: 1px solid #c4c4c4;
  border-radius: 8px;
  box-shadow: 0 6px 24px rgba(0, 0, 0, 0.28);
  font-size: 28px;
}
.m-item {
  display: grid;
  grid-template-columns: 47px auto;
  align-items: center;
  height: 48px;
  padding-left: 41px;
  line-height: 36px;
  color: #2b2b2b;
}
.m-sep {
  height: 4px;
  margin: 12px 0 8px;
  background: #d8d8d8;
}
.m-sel {
  background: #3478f6;
  color: #fff;
}
.svg-t {
  font-family: Roboto, sans-serif;
  font-weight: 300;
}
</style>
